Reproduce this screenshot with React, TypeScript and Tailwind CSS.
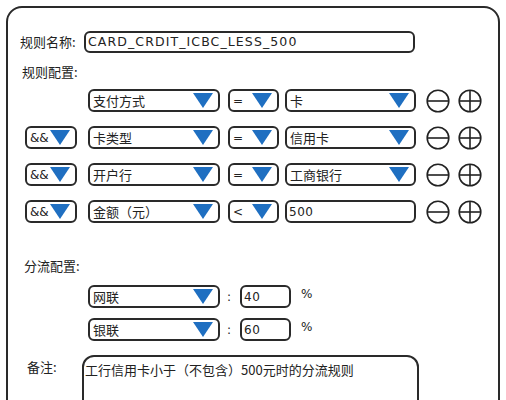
import React from "react";

const cjk = { fontFamily: '"Noto Sans CJK SC", "Noto Sans", sans-serif' };
const hand = { fontFamily: '"DejaVu Sans", "Noto Sans CJK SC", sans-serif' };

function Tri() {
  return (
    <svg width="22" height="17" viewBox="0 0 22 17" className="shrink-0">
      <polygon points="1,1 21,1 11,16" fill="#1f6fc1" />
    </svg>
  );
}

function Select({ w, label, latin }: { w: number; label: string; latin?: boolean }) {
  return (
    <div
      className="flex h-[23px] shrink-0 items-center justify-between rounded-[6px] border-2 border-[#2a2a2a] bg-white pl-[3px] pr-[4px]"
      style={{ width: w }}
    >
      <span
        className={latin ? "text-[12px] leading-none text-[#222]" : "text-[13px] leading-none text-[#222]"}
        style={latin ? hand : cjk}
      >
        {label}
      </span>
      <Tri />
    </div>
  );
}

function TextBox({ w, value }: { w: number; value: string }) {
  return (
    <div
      className="flex h-[23px] shrink-0 items-center rounded-[6px] border-2 border-[#2a2a2a] bg-white pl-[2px]"
      style={{ width: w }}
    >
      <span className="text-[12px] leading-none tracking-[0.5px] text-[#222]" style={hand}>
        {value}
      </span>
    </div>
  );
}

function CircleBtn({ plus }: { plus?: boolean }) {
  return (
    <svg width="24" height="24" viewBox="0 0 24 24" className="shrink-0">
      <circle cx="12" cy="12" r="10.8" fill="none" stroke="#222" strokeWidth="1.6" />
      <line x1="1.2" y1="12" x2="22.8" y2="12" stroke="#222" strokeWidth="1.6" />
      {plus && <line x1="12" y1="1.2" x2="12" y2="22.8" stroke="#222" strokeWidth="1.6" />}
    </svg>
  );
}

type Cond = { join?: string; field: string; op: string; value: string; input?: boolean };

const conds: Cond[] = [
  { field: "支付方式", op: "=", value: "卡" },
  { join: "&&", field: "卡类型", op: "=", value: "信用卡" },
  { join: "&&", field: "开户行", op: "=", value: "工商银行" },
  { join: "&&", field: "金额（元）", op: "<", value: "500", input: true },
];

function CondRow({ c }: { c: Cond }) {
  return (
    <div className="flex h-[23px] items-center pl-[17px]">
      {c.join ? (
        <Select w={52} label={c.join} latin />
      ) : (
        <div className="w-[52px] shrink-0" />
      )}
      <div className="ml-[11px]">
        <Select w={132} label={c.field} />
      </div>
      <div className="ml-[8px]">
        <Select w={51} label={c.op} latin />
      </div>
      <div className="ml-[6px]">
        {c.input ? <TextBox w={131} value={c.value} /> : <Select w={131} label={c.value} />}
      </div>
      <div className="ml-[10px] flex items-center gap-[8px]">
        <CircleBtn />
        <CircleBtn plus />
      </div>
    </div>
  );
}

function SplitRow({ name, pct }: { name: string; pct: string }) {
  return (
    <div className="flex h-[23px] items-center pl-[80px]">
      <Select w={132} label={name} />
      <span className="ml-[7px] w-[13px] text-[12px] text-[#222]" style={hand}>
        :
      </span>
      <TextBox w={51} value={pct} />
      <span className="ml-[10px] -mt-[6px] text-[12px] text-[#222]" style={hand}>
        %
      </span>
    </div>
  );
}

export default function App() {
  return (
    <div className="h-[400px] w-[506px] overflow-hidden bg-white">
      <div className="ml-[6px] mt-[6px] h-[440px] w-[494px] rounded-[16px] border-2 border-[#2a2a2a] bg-white">
        <div className="flex flex-col pt-[23px]">
          {/* rule name */}
          <div className="flex h-[22px] items-center pl-[12px]">
            <span className="w-[64px] text-[13px] text-[#222]" style={cjk}>
              规则名称:
            </span>
            <div className="flex h-[22px] w-[331px] items-center rounded-[6px] border-2 border-[#2a2a2a] pl-[2px]">
              <span className="text-[12.5px] leading-none tracking-[1.1px] text-[#222]" style={hand}>
                CARD_CRDIT_ICBC_LESS_500
              </span>
            </div>
          </div>

          <div className="mt-[9px] flex h-[20px] items-center pl-[14px]">
            <span className="text-[13px] text-[#222]" style={cjk}>
              规则配置:
            </span>
          </div>

          {/* condition rows */}
          <div className="mt-[7px] flex flex-col gap-[14px]">
            {conds.map((c, i) => (
              <CondRow key={i} c={c} />
            ))}
          </div>

          <div className="mt-[33px] flex h-[20px] items-center pl-[16px]">
            <span className="text-[13px] text-[#222]" style={cjk}>
              分流配置:
            </span>
          </div>

          <div className="mt-[9px] flex flex-col gap-[10px]">
            <SplitRow name="网联" pct="40" />
            <SplitRow name="银联" pct="60" />
          </div>

          {/* remarks */}
          <div className="mt-[14px] flex pl-[19px]">
            <span className="mt-[3px] w-[55px] text-[13px] leading-[18px] text-[#222]" style={cjk}>
              备注:
            </span>
            <div className="h-[80px] w-[337px] rounded-t-[12px] border-2 border-[#2a2a2a] pl-[1px]">
              <span className="text-[13px] leading-[14px] text-[#222]" style={cjk}>
                工行信用卡小于（不包含）500元时的分流规则
              </span>
            </div>
          </div>
        </div>
      </div>
    </div>
  );
}
